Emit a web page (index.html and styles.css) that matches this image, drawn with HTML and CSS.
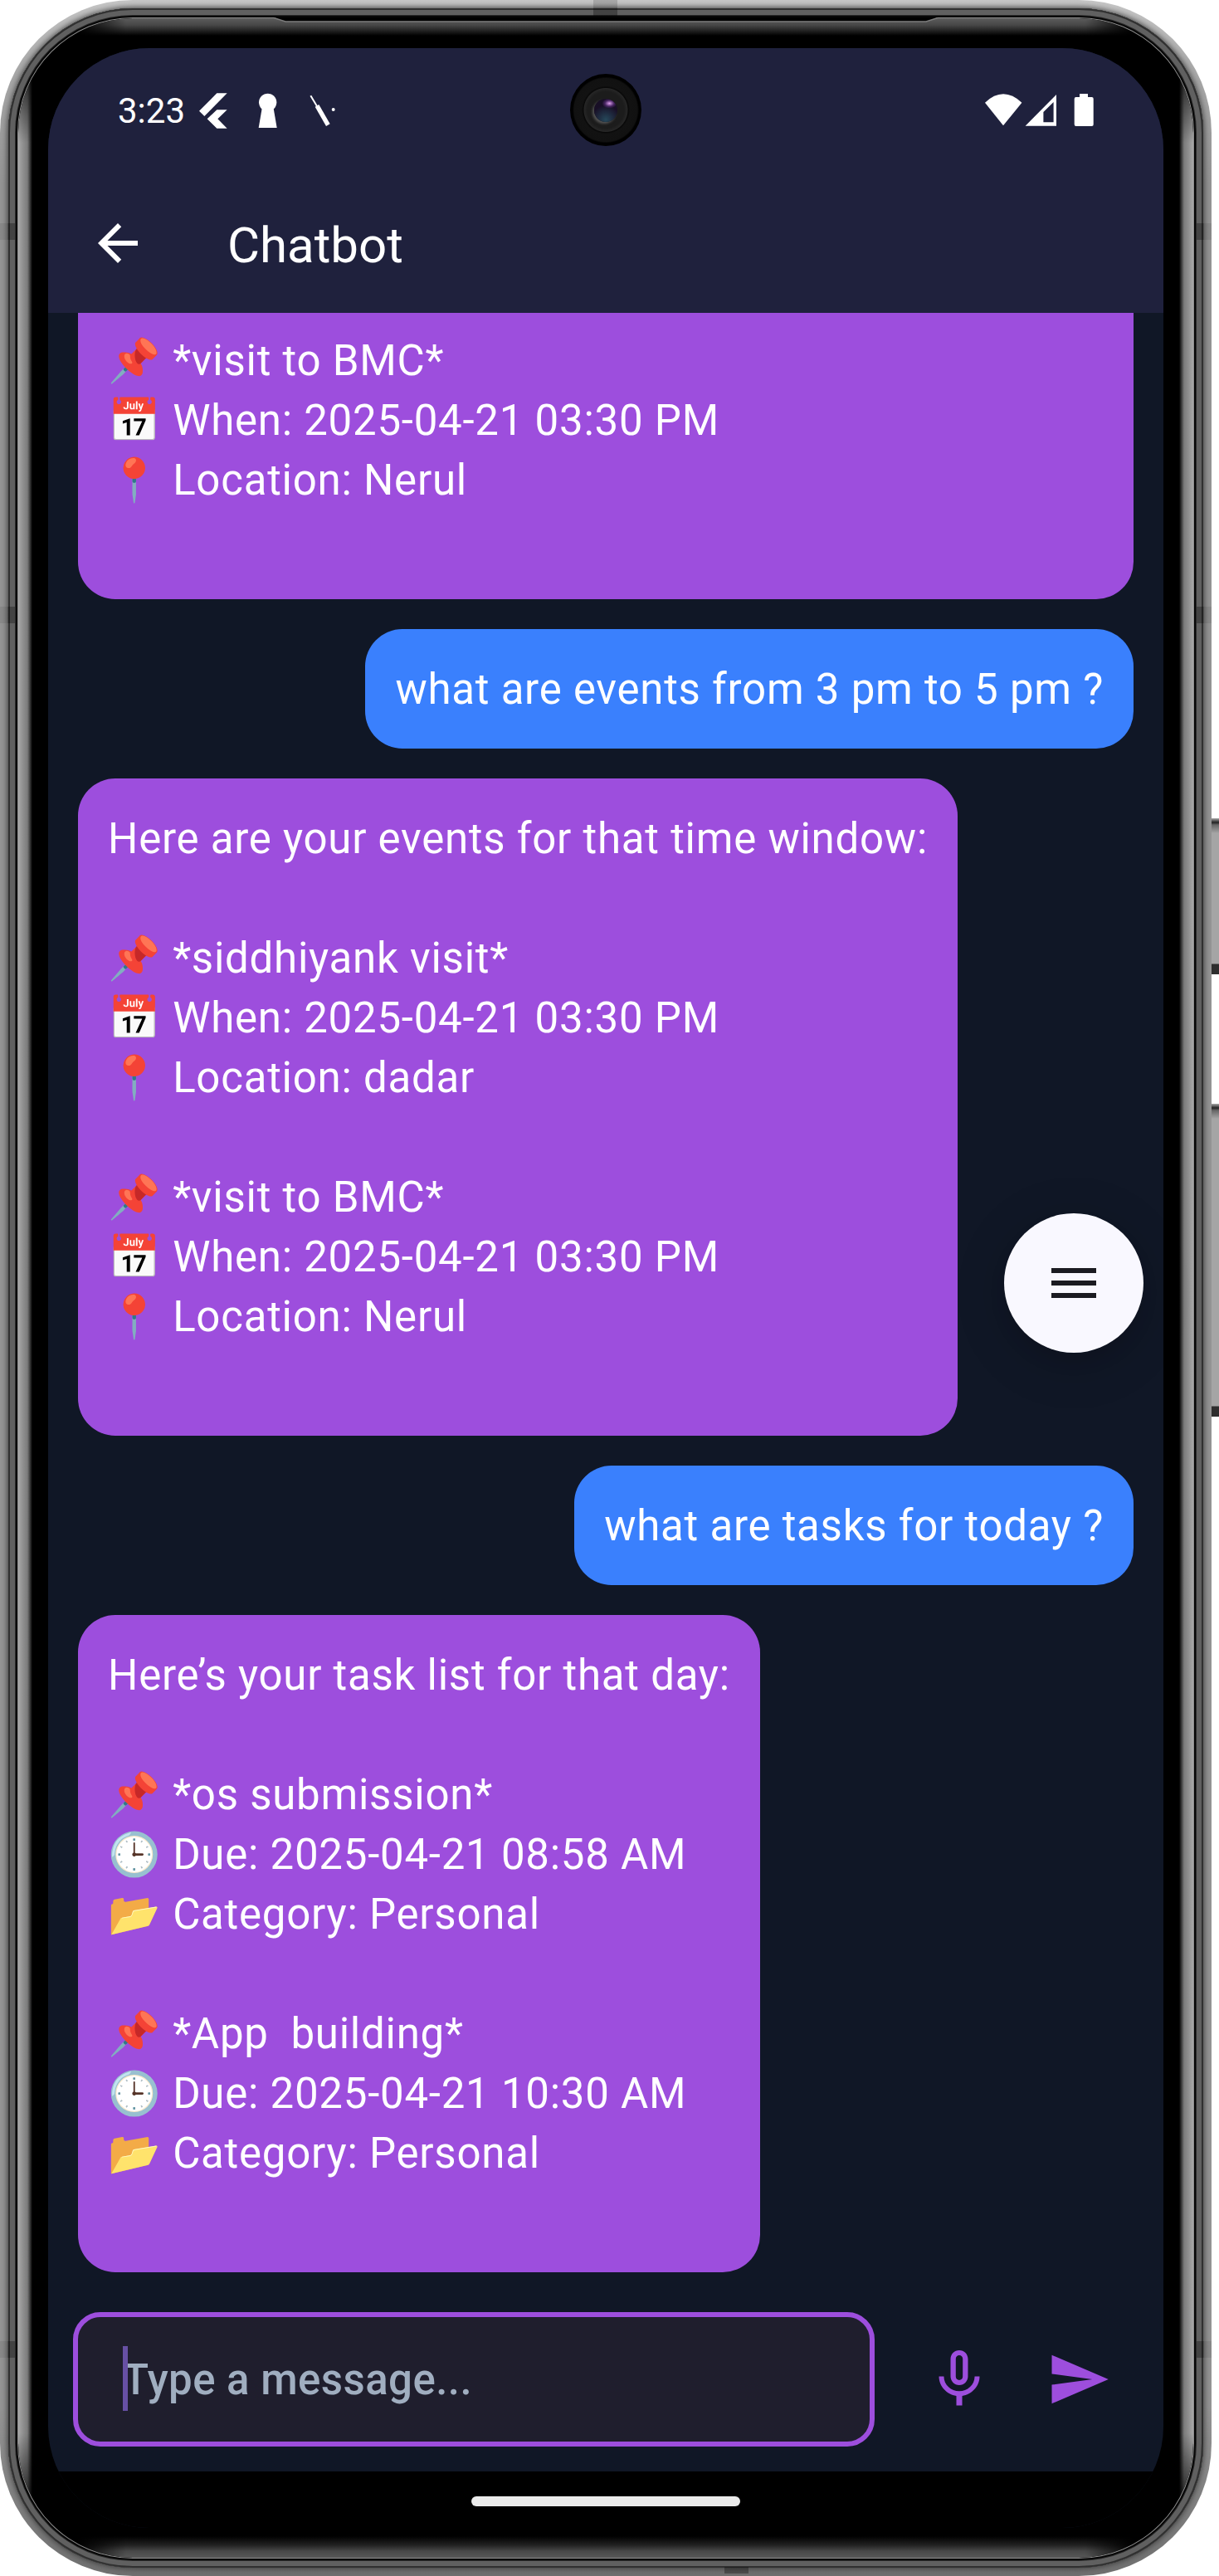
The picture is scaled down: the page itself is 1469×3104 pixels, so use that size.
FILE: index.html
```html
<!DOCTYPE html>
<html lang="en">
<head>
<meta charset="utf-8">
<title>Chatbot</title>
<link rel="stylesheet" href="styles.css">
</head>
<body>
<div class="device">
  <i class="key key-power"></i>
  <i class="key key-volume"></i>
  <div class="phone">
    <div class="bezel"></div>
    <i class="seam seam-l seam-a"></i><i class="seam seam-l seam-b"></i><i class="seam seam-l seam-c"></i>
    <i class="seam seam-r seam-a"></i><i class="seam seam-r seam-b"></i><i class="seam seam-r seam-c"></i>
    <i class="seam seam-top"></i><i class="seam seam-bottom"></i>
    <svg class="earpiece" width="800" height="6" viewBox="0 0 800 6"><path d="M0 0H800L786 5H14z" fill="#000"/><path d="M0 .5L14 5H786L800 .5" fill="none" stroke="#7c7c7c" stroke-width="1.5"/></svg>
    <main class="screen">
      <header class="top">
        <div class="status">
          <span class="time">3:23</span>
          <svg class="status-left" width="168" height="44" viewBox="0 0 504 132">
            <g fill="#fff">
              <path d="M64 1h37L19 84 0 65z"/>
              <path d="M64 61h37L67 94l34 34H64L29 94z"/>
              <circle cx="248" cy="34" r="32"/>
              <path d="M228 50h40l13 76h-66z"/>
              <circle cx="485" cy="60" r="6"/>
            </g>
            <path d="M403 10l23 38" stroke="#fff" stroke-width="6"/>
            <path d="M426 46l40 70" stroke="#fff" stroke-width="16"/>
          </svg>
          <svg class="status-right" width="132" height="40" viewBox="1188 112 132 40" fill="#fff">
            <path d="M1188 123.7Q1210 103 1232.4 123.7L1210 151.3z"/>
            <path fill-rule="evenodd" d="M1274 114V151.7H1236.6zM1270.6 123L1258.4 135V147.3H1270.6z"/>
            <path d="M1302 113h10v4h4.700q2 0 2 2v31q0 2-2 2h-19q-2 0-2-2v-31q0-2 2-2h4.300z"/>
          </svg>
        </div>
        <div class="appbar">
          <svg width="72" height="72" viewBox="0 0 24 24" fill="#fff"><path d="M20 11H7.830l5.590-5.590L12 4l-8 8 8 8 1.410-1.410L7.830 13H20v-2z"/></svg>
          <h1>Chatbot</h1>
        </div>
      </header>
      <section class="chat">
        <div class="bubble bot clipped">📌 *visit to BMC*
📅 When: 2025-04-21 03:30 PM
📍 Location: Nerul
</div>
        <div class="bubble user">what are events from 3 pm to 5 pm ?</div>
        <div class="bubble bot w-events">Here are your events for that time window:

📌 *siddhiyank visit*
📅 When: 2025-04-21 03:30 PM
📍 Location: dadar

📌 *visit to BMC*
📅 When: 2025-04-21 03:30 PM
📍 Location: Nerul
</div>
        <div class="bubble user">what are tasks for today ?</div>
        <div class="bubble bot w-tasks">Here’s your task list for that day:

📌 *os submission*
🕒 Due: 2025-04-21 08:58 AM
📂 Category: Personal

📌 *App  building*
🕒 Due: 2025-04-21 10:30 AM
📂 Category: Personal
</div>
      </section>
      <footer class="composer">
        <div class="field"><i class="caret"></i><span>Type a message...</span></div>
        <svg class="mic" width="84" height="84" viewBox="0 0 24 24"><path d="M12 14c1.660 0 2.990-1.340 2.990-3L15 5c0-1.660-1.340-3-3-3S9 3.340 9 5v6c0 1.660 1.340 3 3 3zm-1.200-9.100c0-.66.54-1.200 1.200-1.200.66 0 1.200.54 1.200 1.200l-.01 6.200c0 .66-.53 1.200-1.190 1.200-.66 0-1.200-.54-1.200-1.200V4.900zm6.500 6.100c0 3-2.540 5.100-5.300 5.100S6.700 14 6.700 11H5c0 3.410 2.720 6.230 6 6.720V21h2v-3.280c3.280-.48 6-3.300 6-6.720h-1.700z"/></svg>
        <svg class="send" width="78" height="78" viewBox="0 0 24 24"><path d="M2.010 21L23 12 2.010 3 2 10l15 2-15 2z"/></svg>
      </footer>
      <nav class="gesture"><i></i></nav>
    </main>
    <div class="camera"><i></i></div>
    <div class="fab"><svg width="72" height="72" viewBox="0 0 24 24" fill="#1b1b21"><path d="M3 18h18v-2H3v2zm0-5h18v-2H3v2zm0-7v2h18V6H3z"/></svg></div>
  </div>
</div>
</body>
</html>
```
FILE: styles.css
```css
* { box-sizing: border-box; }
body { margin: 0; background: #fff; font-family: Roboto, "Noto Sans", sans-serif; color: #fff; }
svg { display: block; flex: none; }

.device { position: relative; width: 1469px; height: 3104px; overflow: hidden; }
.phone {
  position: relative;
  width: 1460px;
  height: 3104px;
  padding: 58px;
  border-radius: 160px;
  background: linear-gradient(#c6c6c6, #a8a8a8 90px, #959595 220px, #959595 2900px, #707070 3104px);
  overflow: hidden;
}

/* metal rim, then the glass with its edge reflections */
.bezel {
  position: absolute;
  inset: 10px;
  border-radius: 150px;
  background: #000;
  box-shadow:
    0 0 7px 1px #3c3c3c,
    inset 0 0 0 2px #303030,
    inset 0 0 0 8px #606060,
    inset 0 0 0 9px #2a2a2a,
    inset 0 0 0 11px #060606,
    inset 0 0 0 12px #8c8c8c;
}
.bezel::before, .bezel::after {
  content: "";
  position: absolute;
  inset: 12px;
  border-radius: 138px;
}
.bezel::before {
  background: linear-gradient(90deg, #a8a8a8 0, #8e8e8e 6px, #7c7c7c 11px, #000 17px, #000 calc(100% - 17px), #7c7c7c calc(100% - 11px), #8e8e8e calc(100% - 6px), #a8a8a8 100%);
  -webkit-mask-image: linear-gradient(transparent 36px, #000 150px, #000 calc(100% - 150px), transparent calc(100% - 36px));
  mask-image: linear-gradient(transparent 36px, #000 150px, #000 calc(100% - 150px), transparent calc(100% - 36px));
}
.bezel::after {
  background: linear-gradient(#5c5c5c 0, #484848 8px, #222 15px, transparent 21px, transparent calc(100% - 26px), #222 calc(100% - 15px), #484848 calc(100% - 8px), #585858 100%);
  -webkit-mask-image: linear-gradient(90deg, transparent 70px, #000 130px, #000 calc(100% - 130px), transparent calc(100% - 70px));
  mask-image: linear-gradient(90deg, transparent 70px, #000 130px, #000 calc(100% - 130px), transparent calc(100% - 70px));
}
.earpiece { position: absolute; left: 330px; top: 21px; }

.seam { position: absolute; background: rgba(0, 0, 0, .3); }
.seam-l, .seam-r { width: 18px; height: 20px; }
.seam-l { left: 0; background: linear-gradient(90deg, rgba(0, 0, 0, .08) 9px, rgba(0, 0, 0, .3) 10px); }
.seam-r { right: 0; background: linear-gradient(270deg, rgba(0, 0, 0, .08) 9px, rgba(0, 0, 0, .3) 10px); }
.seam-a { top: 269px; }
.seam-b { top: 731px; }
.seam-c { top: 2821px; }
.seam-top { left: 715px; top: 0; width: 29px; height: 19px; background: linear-gradient(rgba(0, 0, 0, .15) 9px, rgba(0, 0, 0, .3) 10px); }
.seam-bottom { left: 873px; bottom: 3px; width: 29px; height: 8px; }

.key {
  position: absolute;
  left: 1459px;
  width: 12px;
  background: linear-gradient(#aaa, #222 5px, #666 8px, #a5a5a5 18px, #a5a5a5 calc(100% - 13px), #2e2e2e calc(100% - 12px));
}
.key-power { top: 986px; height: 188px; }
.key-volume { top: 1330px; height: 377px; }

.screen {
  position: relative;
  display: flex;
  flex-direction: column;
  width: 1344px;
  height: 2988px;
  border-radius: 122px;
  background: #101726;
  overflow: hidden;
}

.top { flex: none; height: 319px; background: #1f213d; }
.status { display: flex; align-items: flex-start; height: 151px; padding: 0 83px 0 84px; }
.time { width: 98px; margin-top: 51px; font-size: 42px; line-height: 50px; }
.status-left { margin-top: 54px; }
.status-right { margin: 54px 0 0 auto; }
.appbar { display: flex; align-items: center; gap: 96px; height: 168px; padding-left: 48px; }
.appbar h1 { margin: 6px 0 0; font-size: 60px; line-height: 72px; font-weight: 400; }

.chat { flex: none; display: flex; flex-direction: column; gap: 36px; height: 2361px; padding: 0 36px; }
.bubble {
  flex: none;
  padding: 37px 36px 35px;
  border-radius: 45px;
  font-size: 51px;
  line-height: 72px;
  letter-spacing: .75px;
  white-space: pre;
}
.bot { align-self: flex-start; background: #9d4edd; }
.clipped { width: 1272px; height: 345px; padding-top: 22px; border-radius: 0 0 45px 45px; }
.user { align-self: flex-end; background: #3a80fd; }
.w-events { width: 1060px; height: 792px; }
.w-tasks { width: 822px; height: 792px; }

.composer { flex: none; display: flex; align-items: center; height: 240px; padding: 0 30px; }
.composer path { fill: #9d4edd; }
.field {
  display: flex;
  align-items: center;
  width: 966px;
  height: 162px;
  margin-top: 18px;
  padding-left: 54px;
  border: 6px solid #9d4edd;
  border-radius: 33px;
  background: #1f1e2d;
}
.field span { margin-left: -6px; font-size: 51px; font-weight: 500; letter-spacing: .45px; color: #a0aec0; }
.caret { position: relative; z-index: 1; width: 6px; height: 78px; margin-top: -2px; background: #6750a4; }
.mic { margin: 18px 0 0 60px; }
.send { margin: 18px 0 0 63px; }

.gesture { flex: 1; display: flex; justify-content: center; align-items: flex-start; padding-top: 30px; background: #000; }
.gesture i { width: 324px; height: 12px; border-radius: 6px; background: #ebebeb; }

.camera {
  position: absolute;
  left: 687px;
  top: 89px;
  display: flex;
  align-items: center;
  justify-content: center;
  width: 86px;
  height: 87px;
  border-radius: 50%;
  background: radial-gradient(circle, #1c1c1c 0 22px, #262626 26px, #080808 27px, #121212 29px, #111 38px, #000 40px);
}
.camera i {
  width: 28px;
  height: 28px;
  border-radius: 50%;
  background:
    radial-gradient(ellipse 9px 6px at 66% 20%, #e0a0f0, rgba(120, 60, 160, .5) 60%, transparent),
    radial-gradient(circle at 50% 90%, #26485a, #180f26 60%);
  box-shadow: -2px 2px 3px #555;
}
.fab {
  position: absolute;
  left: 1210px;
  top: 1462px;
  display: flex;
  align-items: center;
  justify-content: center;
  width: 168px;
  height: 168px;
  border-radius: 50%;
  background: #f9f8ff;
  box-shadow: 0 12px 54px 14px rgba(0, 0, 0, .09), 0 12px 20px rgba(0, 0, 0, .08);
}
```
